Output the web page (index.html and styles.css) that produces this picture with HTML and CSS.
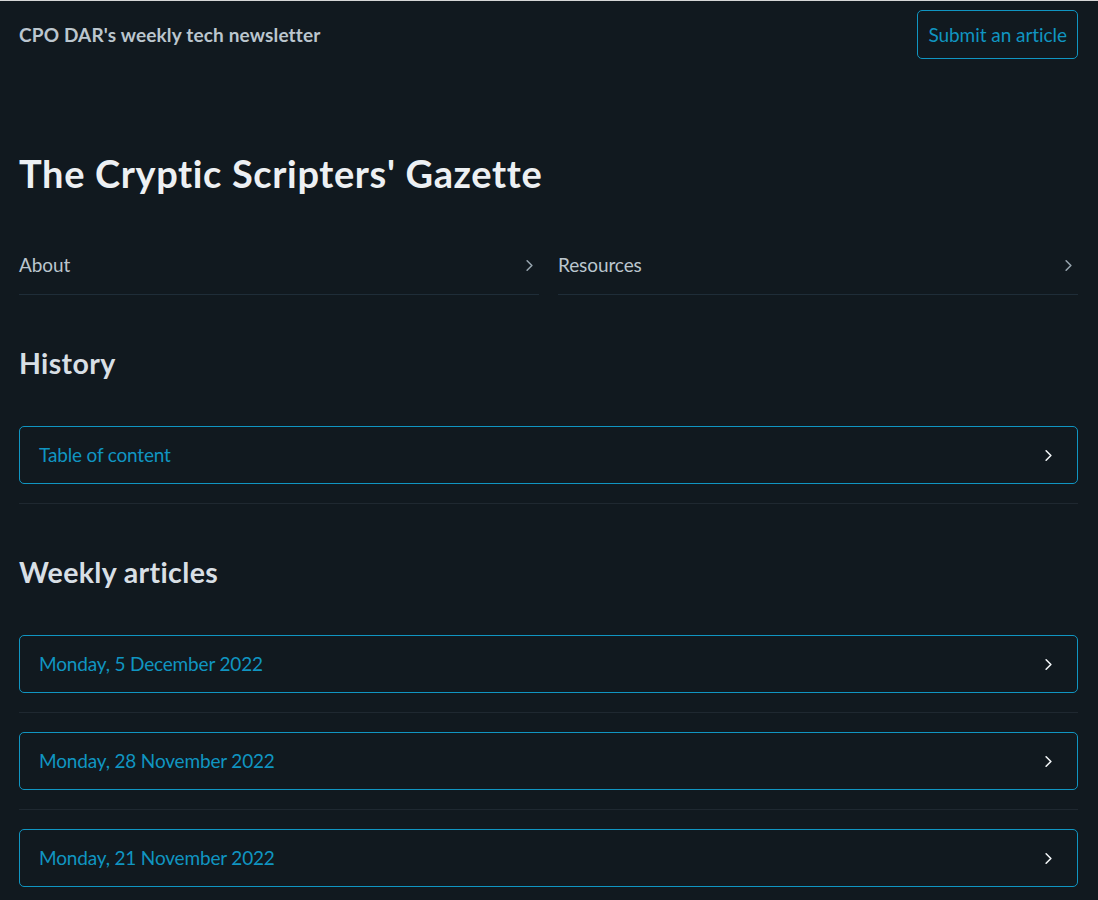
FILE: index.html
```html
<!DOCTYPE html>
<html lang="en">
<head>
<meta charset="utf-8">
<title>The Cryptic Scripters' Gazette</title>
<link rel="stylesheet" href="styles.css">
</head>
<body>
<nav class="topnav">
  <strong class="brand">CPO DAR's weekly tech newsletter</strong>
  <a class="btn-outline" href="#">Submit an article</a>
</nav>
<main class="page">
  <h1 class="title">The Cryptic Scripters' Gazette</h1>
  <div class="grid2">
    <div class="summary-row">
      <span>About</span>
      <svg class="chev" viewBox="0 0 24 24"><polyline points="9 6 15 12 9 18"/></svg>
    </div>
    <div class="summary-row">
      <span>Resources</span>
      <svg class="chev" viewBox="0 0 24 24"><polyline points="9 6 15 12 9 18"/></svg>
    </div>
  </div>

  <h3 class="section-title">History</h3>
  <a class="link-box" href="#">
    <span>Table of content</span>
    <svg class="chev chev-light" viewBox="0 0 24 24"><polyline points="9 6 15 12 9 18"/></svg>
  </a>
  <hr class="sep">

  <h3 class="section-title">Weekly articles</h3>
  <a class="link-box" href="#">
    <span>Monday, 5 December 2022</span>
    <svg class="chev chev-light" viewBox="0 0 24 24"><polyline points="9 6 15 12 9 18"/></svg>
  </a>
  <hr class="sep">
  <a class="link-box" href="#">
    <span>Monday, 28 November 2022</span>
    <svg class="chev chev-light" viewBox="0 0 24 24"><polyline points="9 6 15 12 9 18"/></svg>
  </a>
  <hr class="sep">
  <a class="link-box" href="#">
    <span>Monday, 21 November 2022</span>
    <svg class="chev chev-light" viewBox="0 0 24 24"><polyline points="9 6 15 12 9 18"/></svg>
  </a>
  <hr class="sep">
</main>
</body>
</html>
```

FILE: styles.css
```css
html {
  border-top: 1px solid #d6d6d6;
  background: #11191f;
}
body {
  margin: 0;
  background: #11191f;
  color: #bbc6ce;
  font-family: "Lato", "Open Sans", sans-serif;
  font-size: 19px;
  line-height: 28px;
}
.topnav {
  height: 67px;
  padding: 0 20px 0 19px;
  display: flex;
  align-items: center;
  justify-content: space-between;
}
.brand {
  font-weight: 700;
  font-size: 19px;
  letter-spacing: 0.16px;
  color: #bbc6ce;
}
.btn-outline {
  display: block;
  padding: 9.5px 10px;
  line-height: 28px;
  border: 1px solid #1095c1;
  border-radius: 5px;
  color: #1095c1;
  text-decoration: none;
  font-size: 19px;
  letter-spacing: -0.05px;
}
.page {
  padding: 0 20px 0 19px;
}
.title {
  margin: 82px 0 40px;
  font-size: 38px;
  line-height: 46px;
  font-weight: 700;
  letter-spacing: 0.63px;
  color: #edf0f3;
}
.grid2 {
  display: grid;
  grid-template-columns: 1fr 1fr;
  column-gap: 19px;
}
.summary-row {
  display: flex;
  align-items: center;
  justify-content: space-between;
  padding: 15px 0;
  border-bottom: 1px solid #1f2d38;
  color: #bbc6ce;
}
.summary-row span {
  letter-spacing: -0.1px;
}
.chev {
  width: 19px;
  height: 19px;
  fill: none;
  stroke: #96a3ad;
  stroke-width: 2;
  stroke-linecap: round;
  stroke-linejoin: round;
  flex: none;
}
.chev-light {
  stroke: #f2f5f7;
}
.section-title {
  margin: 51px 0 46px;
  font-size: 28.5px;
  line-height: 34px;
  font-weight: 700;
  letter-spacing: 0.36px;
  color: #d8dfe5;
}
.link-box {
  display: flex;
  align-items: center;
  justify-content: space-between;
  padding: 14px 19px;
  line-height: 28px;
  border: 1px solid #1095c1;
  border-radius: 5px;
  color: #1095c1;
  text-decoration: none;
  margin-bottom: 19px;
}
.link-box span {
  letter-spacing: -0.17px;
}
.sep {
  margin: 0 0 19px;
  border: 0;
  border-top: 1px solid #1f2830;
  height: 0;
}
```
